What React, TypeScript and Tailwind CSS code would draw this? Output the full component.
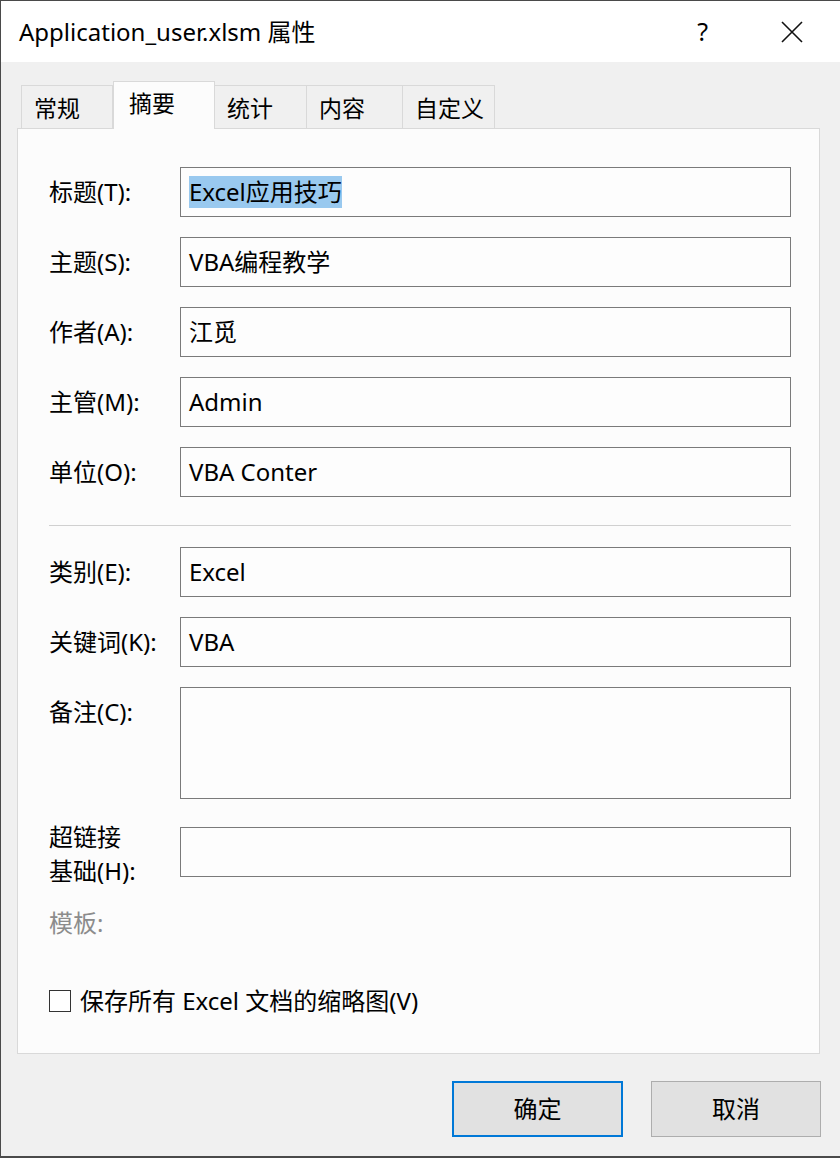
const font = "font-['Noto_Sans','Noto_Sans_CJK_SC',sans-serif]"

const tabs = [
  { name: '常规', w: 'w-[92px]' },
  { name: '摘要', w: 'w-[102px]', active: true },
  { name: '统计', w: 'w-[92px]' },
  { name: '内容', w: 'w-[96px]' },
  { name: '自定义', w: 'w-[92px]' },
]

const Field = ({ label, value, selected }: { label: string; value?: string; selected?: boolean }) => (
  <div className="flex items-center h-[50px] shrink-0">
    <div className="w-[131px] text-[24px]">{label}</div>
    <div className="w-[611px] h-[50px] border border-[#7a7a7a] bg-[#fdfdfd] flex items-center px-[8px] text-[24px]">
      {selected ? <span className="bg-[#99c9ef] leading-[32px]">{value}</span> : value}
    </div>
  </div>
)

const App = () => {
  return (
    <div className={`${font} w-[840px] h-[1158px] bg-[#f0f0f0] border-l border-t border-b-2 border-[#4a4a4a] flex flex-col text-black`}>
      {/* title bar */}
      <div className="h-[61px] bg-white flex items-center pl-[18px] shrink-0">
        <span className="text-[24px]">Application_user.xlsm 属性</span>
        <span className="ml-auto text-[25px] mr-[73px]">?</span>
        <svg width="22" height="22" viewBox="0 0 22 22" className="mr-[37px]">
          <path d="M1 1 L21 21 M21 1 L1 21" stroke="#111" strokeWidth="1.6" fill="none" />
        </svg>
      </div>

      {/* tabs */}
      <div className="flex items-end h-[48px] mt-[19px] ml-[20px] -mb-px relative z-10 shrink-0">
        {tabs.map((t) =>
          t.active ? (
            <div key={t.name} className={`${t.w} h-[48px] border border-b-0 border-[#d9d9d9] bg-[#fcfcfc] pl-[15px] pt-[4px] text-[23px]`}>
              {t.name}
            </div>
          ) : (
            <div key={t.name} className={`${t.w} h-[44px] border border-l-0 first:border-l border-[#d9d9d9] bg-[#f0f0f0] pl-[12px] pt-[5px] text-[23px]`}>
              {t.name}
            </div>
          )
        )}
      </div>

      {/* panel */}
      <div className="ml-[16px] w-[803px] h-[926px] border border-[#d9d9d9] bg-[#fcfcfc] pl-[31px] pt-[38px] flex flex-col shrink-0">
        <div className="flex flex-col gap-[20px] shrink-0">
          <Field label="标题(T):" value="Excel应用技巧" selected />
          <Field label="主题(S):" value="VBA编程教学" />
          <Field label="作者(A):" value="江觅" />
          <Field label="主管(M):" value="Admin" />
          <Field label="单位(O):" value="VBA Conter" />
        </div>
        <div className="h-px w-[742px] bg-[#d0d0d0] mt-[28px] shrink-0" />
        <div className="flex flex-col gap-[20px] mt-[21px] shrink-0">
          <Field label="类别(E):" value="Excel" />
          <Field label="关键词(K):" value="VBA" />
          <div className="flex items-start">
            <div className="w-[131px] h-[50px] flex items-center text-[24px]">备注(C):</div>
            <div className="w-[611px] h-[112px] border border-[#7a7a7a] bg-[#fdfdfd]" />
          </div>
        </div>
        <div className="flex items-start mt-[28px] shrink-0">
          <div className="w-[131px] text-[24px] leading-[34px] -mt-[7px]">
            <div>超链接</div>
            <div>基础(H):</div>
          </div>
          <div className="w-[611px] h-[50px] border border-[#7a7a7a] bg-[#fdfdfd]" />
        </div>
        <div className="mt-[20px] text-[24px] leading-[30px] text-[#8c8c8c] shrink-0">模板:</div>
        <div className="flex items-center h-[30px] mt-[48px] gap-[9px] shrink-0">
          <div className="w-[22px] h-[22px] border border-[#333] bg-white" />
          <span className="text-[24px] leading-[30px]">保存所有 Excel 文档的缩略图(V)</span>
        </div>
      </div>

      {/* buttons */}
      <div className="flex justify-end gap-[28px] pr-[19px] mt-[27px] shrink-0">
        <button className="w-[171px] h-[56px] border-2 border-[#0078d7] bg-[#e1e1e1] text-[24px]">确定</button>
        <button className="w-[170px] h-[56px] border border-[#adadad] bg-[#e1e1e1] text-[24px]">取消</button>
      </div>
    </div>
  )
}

export default App
